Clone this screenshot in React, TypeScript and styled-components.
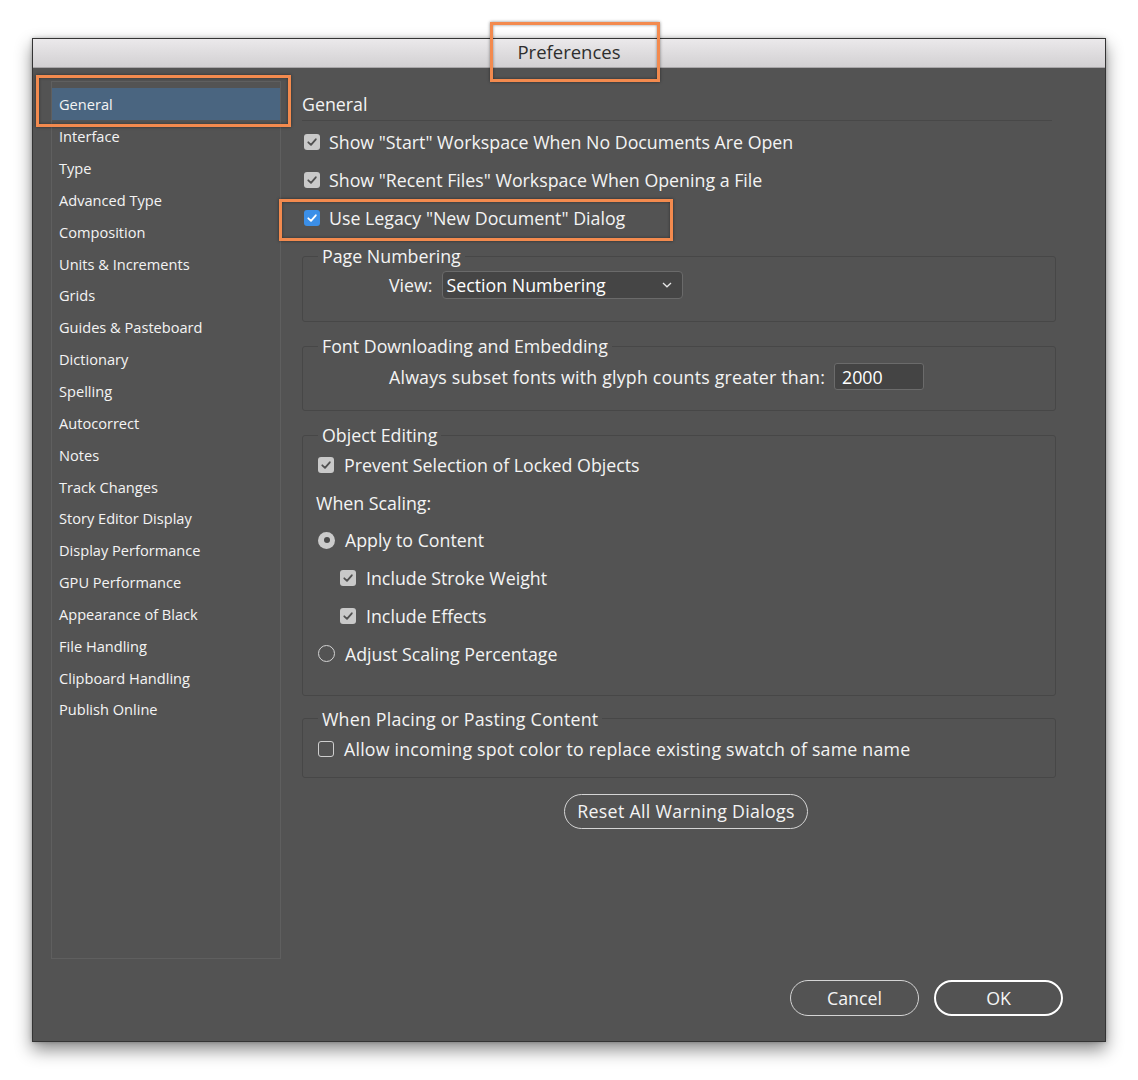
import React from 'react';
import styled, { createGlobalStyle } from 'styled-components';

const GlobalStyle = createGlobalStyle`
  html, body {
    margin: 0;
    padding: 0;
    background: #ffffff;
  }
  body {
    font-family: "Open Sans", "Liberation Sans", sans-serif;
  }
`;

const Stage = styled.div`
  position: relative;
  width: 1138px;
  height: 1080px;
  padding: 38px 0 0 32px;
  box-sizing: border-box;
`;

const Window = styled.div`
  width: 1074px;
  height: 1004px;
  box-sizing: border-box;
  border: 1px solid #343434;
  background: #535353;
  box-shadow: 0 8px 16px rgba(0, 0, 0, 0.45), 0 0 4px rgba(0, 0, 0, 0.25);
  display: flex;
  flex-direction: column;
`;

const TitleBar = styled.div`
  flex: none;
  height: 29px;
  box-sizing: border-box;
  padding-bottom: 3px;
  background: linear-gradient(#ebe9eb, #d2d0d2);
  border-bottom: 1px solid #a8a6a8;
  display: flex;
  align-items: center;
  justify-content: center;
  font-size: 18.5px;
  color: #2e2e2e;
`;

const Main = styled.div`
  flex: 1;
  display: flex;
  gap: 21px;
  padding: 13px 0 0 18px;
  min-height: 0;
`;

const Sidebar = styled.ul`
  list-style: none;
  margin: 0;
  width: 230px;
  height: 878px;
  box-sizing: border-box;
  border: 1px solid #5f5f5f;
  padding: 6px 0 0;
  flex: none;
`;

const SidebarItem = styled.li<{ $active?: boolean }>`
  height: 31.85px;
  display: flex;
  align-items: center;
  padding-left: 7px;
  font-size: 14.6px;
  font-weight: 500;
  color: #f4f4f4;
  background: ${({ $active }) => ($active ? '#4a6580' : 'transparent')};

  &:first-child {
    margin-bottom: 0.5px;
  }
`;

const Content = styled.div`
  width: 754px;
  padding-top: 11px;
  display: flex;
  flex-direction: column;
`;

const Heading = styled.div`
  font-size: 17.8px;
  line-height: 24px;
  color: #f4f4f4;
  padding-bottom: 4px;
  margin-right: 4px;
  border-bottom: 1px solid #484848;
`;

const TopOptions = styled.div`
  padding-top: 2px;
`;

const CheckRow = styled.div<{ $indent?: number }>`
  height: 37.8px;
  display: flex;
  align-items: center;
  gap: 10px;
  padding-left: ${({ $indent }) => $indent ?? 0}px;
  font-size: 17.8px;
  color: #f4f4f4;
  white-space: nowrap;
`;

const TopRow = styled(CheckRow)`
  height: 38px;
  padding-left: 2px;
  gap: 9px;
`;

const Box = styled.span<{ $checked?: boolean; $accent?: boolean }>`
  width: 16px;
  height: 16px;
  flex: none;
  box-sizing: border-box;
  border-radius: 3px;
  display: inline-flex;
  align-items: center;
  justify-content: center;
  background: ${({ $checked, $accent }) =>
    $accent ? '#3b8fe8' : $checked ? '#c9c9c9' : 'transparent'};
  border: ${({ $checked }) => ($checked ? 'none' : '1px solid #cfcfcf')};
`;

const Radio = styled.span<{ $checked?: boolean }>`
  width: 17px;
  height: 17px;
  flex: none;
  box-sizing: border-box;
  border-radius: 50%;
  display: inline-flex;
  align-items: center;
  justify-content: center;
  background: ${({ $checked }) => ($checked ? '#cbcbcb' : 'transparent')};
  border: ${({ $checked }) => ($checked ? 'none' : '1.5px solid #d4d4d4')};

  &::after {
    content: '';
    display: ${({ $checked }) => ($checked ? 'block' : 'none')};
    width: 6px;
    height: 6px;
    border-radius: 50%;
    background: #4a4a4a;
  }
`;

const Group = styled.fieldset<{ $top: number }>`
  margin: ${({ $top }) => $top}px 0 0;
  padding: 0;
  min-width: 0;
  border: 1px solid #474747;
  border-radius: 3px;
`;

const Legend = styled.legend<{ $spacing?: number }>`
  margin-left: 15px;
  padding: 0 4px;
  font-size: 17.8px;
  line-height: 22px;
  color: #f4f4f4;
  letter-spacing: ${({ $spacing }) => $spacing ?? 0}px;
`;

const GroupBody = styled.div<{ $pad: string }>`
  padding: ${({ $pad }) => $pad};
`;

const FieldRow = styled.div<{ $gap: number }>`
  display: flex;
  align-items: center;
  gap: ${({ $gap }) => $gap}px;
  font-size: 17.8px;
  color: #f4f4f4;
  white-space: nowrap;
`;

const Select = styled.div`
  width: 241px;
  height: 28px;
  box-sizing: border-box;
  border: 1px solid #6a6a6a;
  border-radius: 4px;
  background: #454545;
  display: flex;
  align-items: center;
  justify-content: space-between;
  padding: 0 10px 0 4px;
  color: #ffffff;
`;

const NumberInput = styled.div`
  width: 90px;
  height: 27px;
  box-sizing: border-box;
  border: 1px solid #6b6b6b;
  border-radius: 3px;
  background: #444444;
  display: flex;
  align-items: center;
  padding-left: 7px;
  color: #ffffff;
`;

const Spaced = styled.span<{ $spacing: number }>`
  letter-spacing: ${({ $spacing }) => $spacing}px;
`;

const Label = styled.div`
  height: 37.8px;
  display: flex;
  align-items: center;
  font-size: 17.8px;
  color: #f4f4f4;
  margin-left: -2px;
`;

const ResetRow = styled.div`
  display: flex;
  justify-content: center;
  padding-left: 14px;
  margin-top: 16px;
`;

const PillButton = styled.button<{ $primary?: boolean; $width: number; $height: number }>`
  width: ${({ $width }) => $width}px;
  height: ${({ $height }) => $height}px;
  box-sizing: border-box;
  border-radius: 18px;
  background: transparent;
  border: ${({ $primary }) => ($primary ? '2.5px solid #ffffff' : '1.5px solid #d4d4d4')};
  color: #f4f4f4;
  font-family: "Open Sans", "Liberation Sans", sans-serif;
  font-size: 17.8px;
  padding: 0;
  cursor: pointer;
`;

const Footer = styled.div`
  flex: none;
  display: flex;
  justify-content: flex-end;
  gap: 15px;
  padding: 0 42px 25px 0;
`;

const Annotation = styled.div`
  position: absolute;
  box-sizing: border-box;
  border: 3.5px solid #f38a4e;
  box-shadow: 0 0 3px rgba(0, 0, 0, 0.45), inset 0 0 3px rgba(0, 0, 0, 0.45);
  pointer-events: none;
`;

const Check = ({ color }: { color: string }) => (
  <svg width="12" height="12" viewBox="0 0 12 12">
    <path d="M2.3 6.3 L5 8.8 L9.8 3.3" fill="none" stroke={color} strokeWidth="1.8" strokeLinecap="round" strokeLinejoin="round" />
  </svg>
);

const Checkbox = ({ checked, accent }: { checked?: boolean; accent?: boolean }) => (
  <Box $checked={checked} $accent={accent}>
    {checked && <Check color={accent ? '#ffffff' : '#505050'} />}
  </Box>
);

const Chevron = () => (
  <svg width="10" height="6" viewBox="0 0 10 6">
    <path d="M1 1 L5 4.8 L9 1" fill="none" stroke="#e6e6e6" strokeWidth="1.3" />
  </svg>
);

const sections = [
  'General',
  'Interface',
  'Type',
  'Advanced Type',
  'Composition',
  'Units & Increments',
  'Grids',
  'Guides & Pasteboard',
  'Dictionary',
  'Spelling',
  'Autocorrect',
  'Notes',
  'Track Changes',
  'Story Editor Display',
  'Display Performance',
  'GPU Performance',
  'Appearance of Black',
  'File Handling',
  'Clipboard Handling',
  'Publish Online',
];

export default function App() {
  return (
    <>
      <GlobalStyle />
      <Stage>
        <Window>
          <TitleBar>Preferences</TitleBar>
          <Main>
            <Sidebar>
              {sections.map((name) => (
                <SidebarItem key={name} $active={name === 'General'}>
                  {name}
                </SidebarItem>
              ))}
            </Sidebar>

            <Content>
              <Heading>General</Heading>
              <TopOptions>
                <TopRow>
                  <Checkbox checked />
                  Show "Start" Workspace When No Documents Are Open
                </TopRow>
                <TopRow>
                  <Checkbox checked />
                  Show "Recent Files" Workspace When Opening a File
                </TopRow>
                <TopRow>
                  <Checkbox checked accent />
                  Use Legacy "New Document" Dialog
                </TopRow>
              </TopOptions>

              <Group $top={8}>
                <Legend>Page Numbering</Legend>
                <GroupBody $pad="4px 0 22px 86px">
                  <FieldRow $gap={9}>
                    View:
                    <Select>
                      Section Numbering
                      <Chevron />
                    </Select>
                  </FieldRow>
                </GroupBody>
              </Group>

              <Group $top={13}>
                <Legend>Font Downloading and Embedding</Legend>
                <GroupBody $pad="6px 0 20px 86px">
                  <FieldRow $gap={9}>
                    <Spaced $spacing={0.2}>Always subset fonts with glyph counts greater than:</Spaced>
                    <NumberInput>2000</NumberInput>
                  </FieldRow>
                </GroupBody>
              </Group>

              <Group $top={13}>
                <Legend>Object Editing</Legend>
                <GroupBody $pad="0 0 22px 15px">
                  <CheckRow>
                    <Checkbox checked />
                    Prevent Selection of Locked Objects
                  </CheckRow>
                  <Label>When Scaling:</Label>
                  <CheckRow>
                    <Radio $checked />
                    Apply to Content
                  </CheckRow>
                  <CheckRow $indent={22}>
                    <Checkbox checked />
                    Include Stroke Weight
                  </CheckRow>
                  <CheckRow $indent={22}>
                    <Checkbox checked />
                    Include Effects
                  </CheckRow>
                  <CheckRow>
                    <Radio />
                    Adjust Scaling Percentage
                  </CheckRow>
                </GroupBody>
              </Group>

              <Group $top={12}>
                <Legend $spacing={0.2}>When Placing or Pasting Content</Legend>
                <GroupBody $pad="0 0 9px 15px">
                  <CheckRow>
                    <Checkbox />
                    <Spaced $spacing={0.2}>Allow incoming spot color to replace existing swatch of same name</Spaced>
                  </CheckRow>
                </GroupBody>
              </Group>

              <ResetRow>
                <PillButton $width={244} $height={35}>
                  <Spaced $spacing={0.3}>Reset All Warning Dialogs</Spaced>
                </PillButton>
              </ResetRow>
            </Content>
          </Main>

          <Footer>
            <PillButton $width={129} $height={36}>Cancel</PillButton>
            <PillButton $primary $width={129} $height={36}>OK</PillButton>
          </Footer>
        </Window>

        <Annotation style={{ left: 490, top: 22, width: 170, height: 60 }} />
        <Annotation style={{ left: 36, top: 75, width: 255, height: 52 }} />
        <Annotation style={{ left: 279, top: 199, width: 394, height: 42 }} />
      </Stage>
    </>
  );
}
